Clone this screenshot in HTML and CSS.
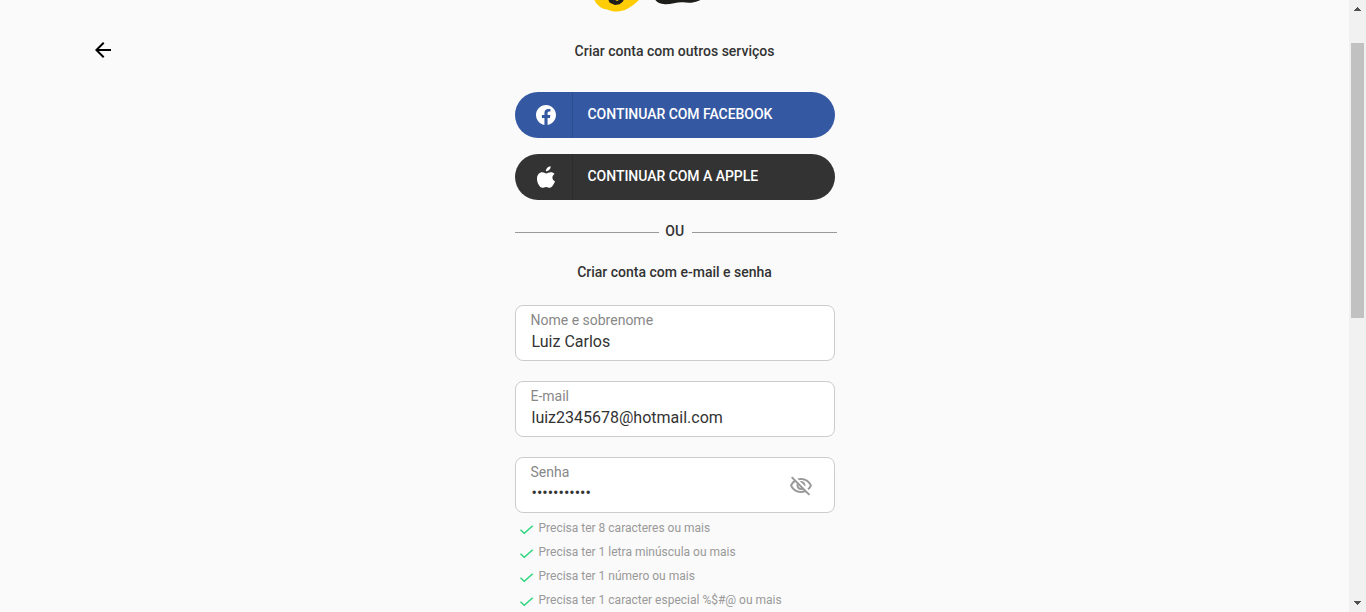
FILE: index.html
```html
<!DOCTYPE html>
<html lang="pt-BR">
<head>
<meta charset="utf-8">
<title>Criar conta</title>
<link rel="stylesheet" href="styles.css">
</head>
<body>
<div class="window">
  <main class="page">
    <a class="back" aria-label="Voltar">
      <svg width="24" height="24" viewBox="0 0 24 24"><path d="M20 11H7.830l5.590-5.590L12 4l-8 8 8 8 1.410-1.410L7.830 13H20v-2z"/></svg>
    </a>
    <div class="signup">
      <svg class="logo" width="120" height="14" viewBox="0 0 120 14">
        <path d="M2.500-2C4.500 4 9 7.500 13 9 17 9 19 11.500 24 11.500 31 11.500 36 9.500 40 6.500 45 3 47.500 1 49-2z" fill="#ffcd06"/>
        <path d="M17-1L18.500 2.500 21 3.800 24 5 28.500 4.300 32 1.500 33-1 28.500-1 26.500 1 21.500-1z" fill="#1d1d1b"/>
        <path d="M63-2C65 1.500 68 4 74 4.300 80 4.500 86 2 92 2.300 97 3 103 3 107 1 110 0 111-1 112-2z" fill="#1d1d1b"/>
      </svg>
      <h2 class="heading">Criar conta com outros serviços</h2>
      <button class="social facebook">
        <span class="social-icon"><svg width="24" height="24" viewBox="0 0 24 24"><path fill="#fff" d="M22 12c0-5.520-4.480-10-10-10S2 6.480 2 12c0 4.990 3.660 9.130 8.440 9.880v-6.990H7.900V12h2.540V9.800c0-2.510 1.490-3.890 3.780-3.890 1.090 0 2.240.19 2.240.19v2.460h-1.260c-1.240 0-1.630.77-1.630 1.560V12h2.770l-.44 2.890h-2.330v6.990C18.340 21.130 22 16.990 22 12z"/></svg></span>
        <span class="social-label">CONTINUAR COM FACEBOOK</span>
      </button>
      <button class="social apple">
        <span class="social-icon"><svg width="18" height="22" viewBox="0 0 18 22"><path fill="#fff" d="M13.600.2c.3 2.700-2 5-4.700 5C8.700 2.700 11 .5 13.600.2zM17.600 8c-3.200 2-2.700 5.900.4 7.300-.8 2.300-2.800 6.300-5.100 6.400-1.500 0-2-.8-3.800-.8s-2.300.8-3.700.8C2.700 21.700 0 16.700 0 12.900c0-4.200 2.400-6.600 5.200-6.600 1.700 0 3 1.100 4 1.100s2.700-1.200 4.600-1.200c1.500 0 3 .5 3.800 1.800z"/></svg></span>
        <span class="social-label">CONTINUAR COM A APPLE</span>
      </button>
      <div class="divider"><span class="rule"></span><span class="or">OU</span><span class="rule"></span></div>
      <h2 class="heading">Criar conta com e-mail e senha</h2>
      <div class="field"><span class="label">Nome e sobrenome</span><span class="value">Luiz Carlos</span></div>
      <div class="field"><span class="label">E-mail</span><span class="value">luiz2345678@hotmail.com</span></div>
      <div class="field password">
        <div class="field-text"><span class="label">Senha</span><span class="value dots">•••••••••••</span></div>
        <svg class="eye" width="24" height="24" viewBox="0 0 24 24"><path fill="#999" d="M12 6c3.790 0 7.170 2.130 8.820 5.500-.59 1.220-1.420 2.270-2.410 3.120l1.410 1.410c1.390-1.230 2.490-2.770 3.180-4.530C21.270 7.110 17 4 12 4c-1.270 0-2.490.2-3.640.57l1.650 1.650C10.660 6.090 11.320 6 12 6zm-1.070 1.140L13 9.210c.57.25 1.030.71 1.280 1.280l2.070 2.070c.08-.34.14-.7.14-1.070C16.500 9.010 14.480 7 12 7c-.37 0-.72.05-1.070.14zM2.010 3.870l2.680 2.680C3.060 7.830 1.770 9.530 1 11.500 2.730 15.890 7 19 12 19c1.520 0 2.980-.29 4.320-.82l3.420 3.420 1.410-1.410L3.420 2.450 2.010 3.870zm7.500 7.500l2.610 2.610c-.04.01-.08.02-.12.02-1.380 0-2.500-1.120-2.500-2.500 0-.05.01-.08.01-.13zm-3.400-3.400l1.750 1.750c-.23.55-.36 1.150-.36 1.780 0 2.480 2.020 4.500 4.500 4.500.63 0 1.230-.13 1.770-.36l.98.98c-.88.24-1.800.38-2.750.38-3.790 0-7.170-2.130-8.820-5.500.7-1.430 1.720-2.610 2.930-3.530z"/></svg>
      </div>
      <ul class="rules">
        <li><svg class="check" viewBox="0 0 14 10"><path d="M.5 4.700L4.300 8.300 12.700.8"/></svg>Precisa ter 8 caracteres ou mais</li>
        <li><svg class="check" viewBox="0 0 14 10"><path d="M.5 4.700L4.300 8.300 12.700.8"/></svg>Precisa ter 1 letra minúscula ou mais</li>
        <li><svg class="check" viewBox="0 0 14 10"><path d="M.5 4.700L4.300 8.300 12.700.8"/></svg>Precisa ter 1 número ou mais</li>
        <li><svg class="check" viewBox="0 0 14 10"><path d="M.5 4.700L4.300 8.300 12.700.8"/></svg>Precisa ter 1 caracter especial %$#@ ou mais</li>
      </ul>
    </div>
  </main>
  <div class="scrollbar">
    <svg width="7" height="4" viewBox="0 0 7 4" shape-rendering="crispEdges"><path fill="#505050" d="M3 0h1v1h1v1h1v1h1v1H0V3h1V2h1V1h1z"/></svg>
    <div class="thumb"></div>
    <svg class="down" width="7" height="4" viewBox="0 0 7 4" shape-rendering="crispEdges"><path fill="#505050" d="M0 0h7v1H6v1H5v1H4v1H3V3H2V2H1V1H0z"/></svg>
  </div>
</div>
</body>
</html>
```

FILE: styles.css
```css
* { box-sizing: border-box; }
body { margin: 0; background: #fafafa; color: #333; font-family: Roboto, sans-serif; overflow: hidden; }
.window { display: flex; height: 612px; overflow: hidden; }
.page { display: flex; flex: 1; }
.back { width: 24px; height: 24px; margin: 38px 400px 0 91px; flex: none; }
.back svg { display: block; }
.signup { width: 320px; flex: none; }
.logo { display: block; margin: 0 0 0 76px; }
.heading { margin: 0; padding-right: 1px; text-align: center; font-size: 14px; font-weight: 500; line-height: 20px; }
.logo + .heading { margin: 27px 0 31px; }
.social { display: flex; width: 320px; height: 46px; padding: 0; border: 0; border-radius: 23px; margin: 0 0 16px; overflow: hidden; font: 500 14px/20px Roboto, sans-serif; letter-spacing: -.04px; color: #fff; text-align: left; }
.facebook { background: #3558a2; }
.apple { background: #333; }
.social-icon { width: 58px; height: 46px; padding-left: 4px; border-right: 1px solid rgba(0, 0, 0, .12); display: flex; align-items: center; justify-content: center; }
.social-label { padding: 12px 0 0 14.500px; }
.divider { display: flex; align-items: center; width: 322px; height: 20px; margin-top: 21px; }
.rule { flex: none; width: 144px; height: 1px; background: #999; margin-top: 2px; }
.rule:last-child { width: 145px; }
.or { width: 33px; padding-right: 1.500px; text-align: center; font-size: 14px; font-weight: 500; line-height: 20px; }
.divider + .heading { margin: 21px 0 23px; }
.field { width: 320px; height: 56px; margin-bottom: 20px; padding: 5px 15px 0 14.500px; background: #fff; border: 1px solid #ccc; border-radius: 8px; }
.label, .value { display: block; }
.label { font-size: 14px; line-height: 18px; color: #888; }
.value { font-size: 16px; line-height: 24px; margin-top: 1px; padding-left: 1px; color: #333; }
.dots { margin-top: 0; }
.password { display: flex; justify-content: space-between; margin-bottom: 3px; }
.eye { margin: 10.500px 6px 0 0; }
.rules { list-style: none; margin: 0; padding: 0 0 0 4.500px; color: #999; font-size: 12px; }
.rules li { height: 24px; line-height: 24px; display: flex; align-items: center; white-space: nowrap; }
.check { width: 14px; height: 10px; margin: 4px 5px 0 0; fill: none; stroke: #2bd47d; stroke-width: 1.5; }
.scrollbar { width: 17px; height: 612px; background: #f1f1f1; display: flex; flex-direction: column; align-items: center; padding-top: 7px; flex: none; }
.thumb { width: 13px; height: 275px; margin-top: 32px; background: #c1c1c1; }
.down { margin-top: auto; margin-bottom: 7px; }
```
